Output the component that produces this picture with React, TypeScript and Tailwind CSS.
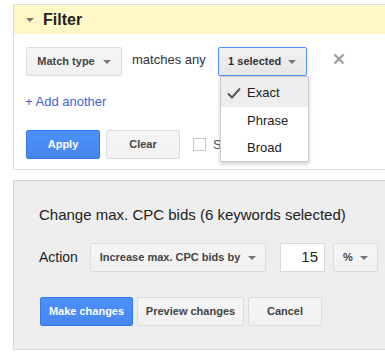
import React from 'react';

const font = { fontFamily: '"Liberation Sans", Arial, sans-serif' };

const Caret = ({ className = '' }: { className?: string }) => (
  <span
    className={`inline-block w-0 h-0 border-l-[4px] border-r-[4px] border-t-[4px] border-l-transparent border-r-transparent border-t-[#777] ${className}`}
  />
);

const GreyButton = ({
  children,
  className = '',
}: {
  children: React.ReactNode;
  className?: string;
}) => (
  <button
    className={`flex items-center justify-center h-[29px] rounded-[2px] border border-[#dcdcdc] bg-gradient-to-b from-[#f5f5f5] to-[#f1f1f1] text-[11px] font-bold text-[#444] ${className}`}
  >
    {children}
  </button>
);

const BlueButton = ({
  children,
  className = '',
}: {
  children: React.ReactNode;
  className?: string;
}) => (
  <button
    className={`flex items-center justify-center h-[29px] rounded-[2px] border border-[#3079ed] bg-gradient-to-b from-[#4d90fe] to-[#4787ed] text-[11px] font-bold text-white ${className}`}
  >
    {children}
  </button>
);

export default function App() {
  return (
    <div className="w-[385px] h-[353px] overflow-hidden bg-white relative" style={font}>
      {/* Filter panel */}
      <div className="ml-[13px] mt-[4px] w-[400px] border border-[#dddddd]">
        <div className="h-[29px] bg-[#fff7c5] flex items-center pl-[12px]">
          <Caret className="mr-[9px]" />
          <span className="text-[16px] font-bold text-[#222]">Filter</span>
        </div>
        <div className="pl-[12px] pt-[13px] pb-[10px] bg-white">
          <div className="flex items-center h-[29px]">
            <GreyButton className="w-[96px] gap-[8px]">
              <span>Match type</span>
              <Caret />
            </GreyButton>
            <span className="ml-[10px] text-[13px] text-[#333] -mt-[4px]">matches any</span>
            <button className="ml-[12px] flex items-center justify-center gap-[7px] w-[89px] h-[29px] rounded-[2px] border border-[#4d90fe] bg-gradient-to-b from-[#f1f1f1] to-[#e6e6e6] text-[11px] font-bold text-[#333]">
              <span>1 selected</span>
              <Caret />
            </button>
            <svg className="ml-[26px] -mt-[6px]" width="12" height="12" viewBox="0 0 12 12">
              <path d="M1.5 1.5 L10.5 10.5 M10.5 1.5 L1.5 10.5" stroke="#a0a0a0" strokeWidth="2.4" />
            </svg>
          </div>
          <div className="mt-[19px] h-[14px] flex items-center text-[13px] text-[#4466d4] -ml-[1px]">
            + Add another
          </div>
          <div className="mt-[21px] flex items-center">
            <BlueButton className="w-[74px]">Apply</BlueButton>
            <GreyButton className="ml-[6px] w-[74px]">Clear</GreyButton>
            <span className="ml-[13px] w-[13px] h-[13px] border border-[#c6c6c6] bg-white" />
            <span className="ml-[7px] text-[13px] text-[#555]">Show</span>
          </div>
        </div>
      </div>

      {/* Dropdown menu */}
      <div className="absolute left-[220px] top-[76px] w-[89px] bg-white border border-[#cccccc] shadow-[0_2px_4px_rgba(0,0,0,0.2)] text-[13px] text-[#222]">
        <div className="h-[30px] bg-[#eeeeee] flex items-center pt-[2px]">
          <svg className="ml-[6px]" width="14" height="12" viewBox="0 0 14 12">
            <path d="M1 6.5 L5 10.5 L13 1.5" fill="none" stroke="#555" strokeWidth="2" />
          </svg>
          <span className="ml-[6px]">Exact</span>
        </div>
        <div className="h-[27px] flex items-center pl-[26px]">Phrase</div>
        <div className="h-[27px] flex items-center pl-[26px]">Broad</div>
      </div>

      {/* Change bids panel */}
      <div className="ml-[13px] mt-[10px] w-[400px] h-[170px] border border-[#d6d6d6] bg-[#eeeeee] pl-[25px]">
        <div className="pt-[24px] text-[15px] text-[#222] leading-[20px]">
          Change max. CPC bids (6 keywords selected)
        </div>
        <div className="mt-[18px] flex items-center">
          <span className="text-[14px] text-[#222] w-[51px]">Action</span>
          <GreyButton className="w-[176px] gap-[8px]">
            <span>Increase max. CPC bids by</span>
            <Caret />
          </GreyButton>
          <div className="ml-[14px] w-[45px] h-[29px] bg-white border border-[#d9d9d9] flex items-center justify-end pr-[6px] text-[15px] text-[#222]">
            15
          </div>
          <GreyButton className="ml-[8px] w-[45px] gap-[7px]">
            <span>%</span>
            <Caret />
          </GreyButton>
        </div>
        <div className="mt-[25px] flex items-center">
          <BlueButton className="ml-[1px] w-[93px]">Make changes</BlueButton>
          <GreyButton className="ml-[4px] w-[107px]">Preview changes</GreyButton>
          <GreyButton className="ml-[4px] w-[74px]">Cancel</GreyButton>
        </div>
      </div>
    </div>
  );
}
